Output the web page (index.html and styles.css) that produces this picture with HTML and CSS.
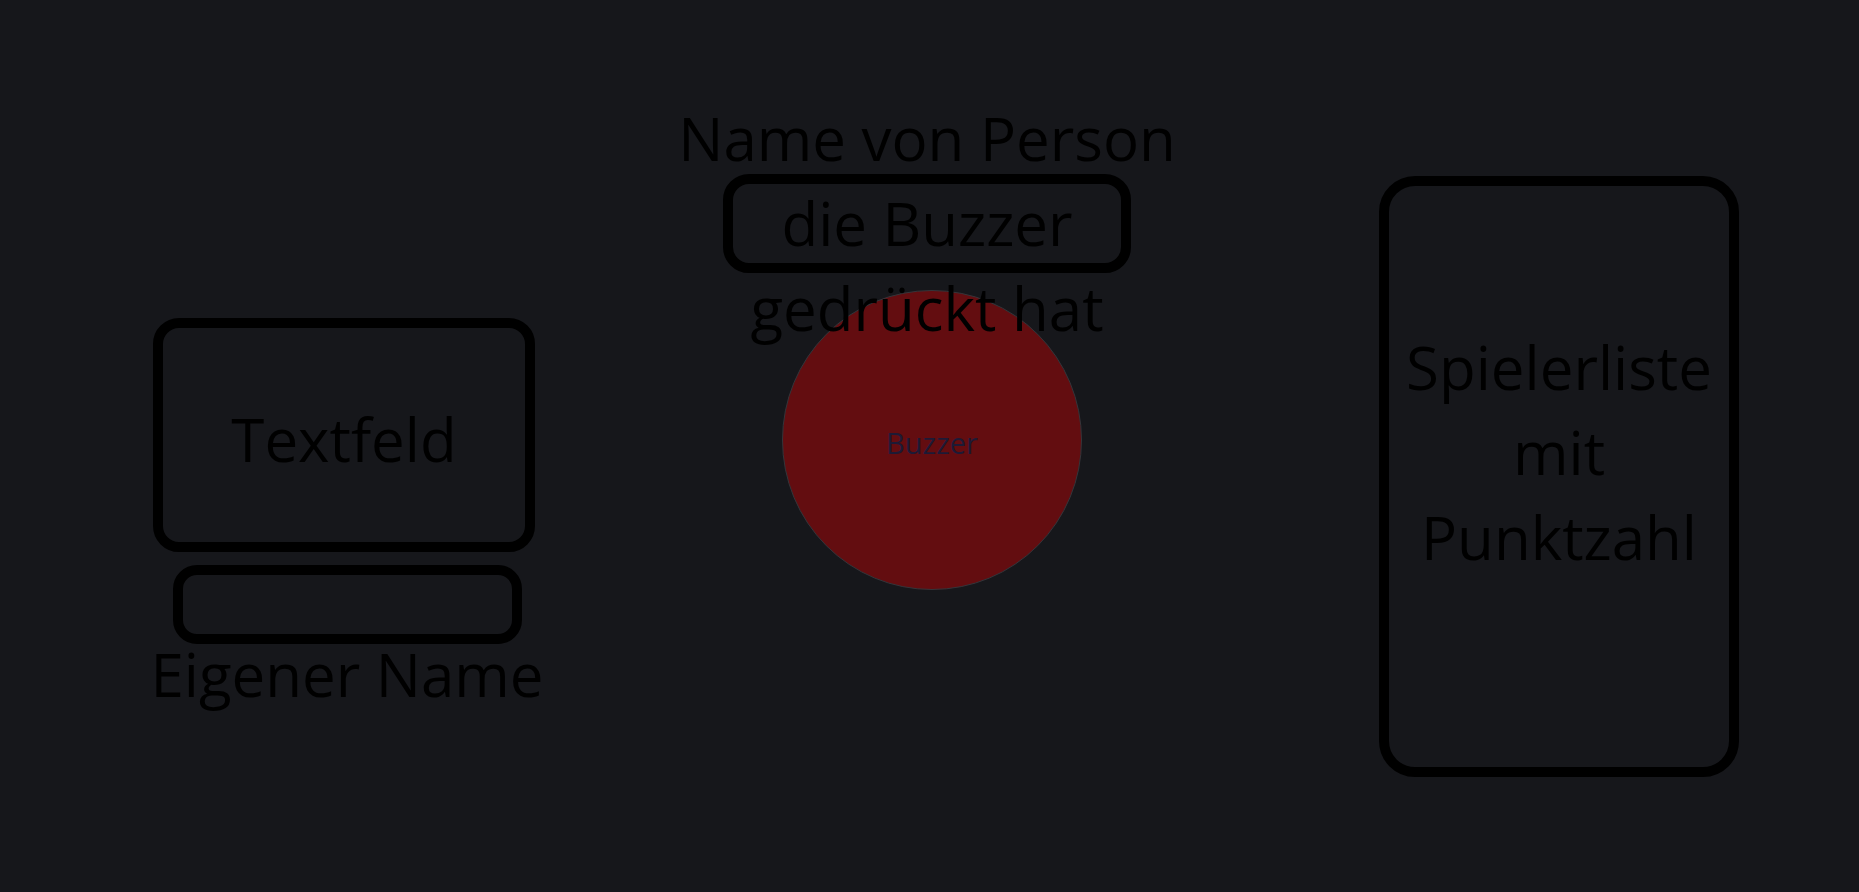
FILE: index.html
```html
<!DOCTYPE html>
<html lang="de">
<head>
<meta charset="utf-8">
<title>Buzzer</title>
<link rel="stylesheet" href="styles.css">
</head>
<body>
<main class="stage">
  <section class="col col-left">
    <div class="panel textfeld"><span class="big">Textfeld</span></div>
    <div class="panel namefield"></div>
    <div class="big label">Eigener Name</div>
  </section>
  <section class="col-center">
    <div class="big line">Name von Person</div>
    <div class="big whobox">die Buzzer</div>
    <div class="big line line-after">gedrückt hat</div>
    <div class="buzzer">Buzzer</div>
  </section>
  <section class="col col-right">
    <div class="big playerlist">Spielerliste mit Punktzahl</div>
  </section>
</main>
</body>
</html>
```

FILE: styles.css
```css
html, body {
  margin: 0;
  height: 100%;
}

body {
  background: #16171b;
  color: #000;
  font-family: "Open Sans", "Noto Sans", sans-serif;
  overflow: hidden;
}

.stage {
  display: flex;
  align-items: flex-start;
  padding-left: 152px;
}

.big {
  font-size: 60px;
  line-height: 85px;
}

.col {
  display: flex;
  flex-direction: column;
  align-items: center;
}

.panel {
  box-sizing: border-box;
  border: 10px solid #000;
}

.col-left {
  width: 390px;
  margin-top: 318px;
}

.textfeld {
  width: 382px;
  height: 234px;
  border-radius: 26px;
  margin-right: 6px;
  padding-top: 9px;
  display: flex;
  align-items: center;
  justify-content: center;
}

.namefield {
  width: 349px;
  height: 79px;
  border-radius: 24px;
  margin-top: 13px;
}

.label {
  line-height: 60px;
  white-space: nowrap;
}

.col-center {
  display: block;
  width: 500px;
  margin-left: 135px;
  margin-top: 96px;
}

.line {
  white-space: nowrap;
  text-align: center;
}

.whobox {
  box-sizing: border-box;
  width: 408px;
  height: 99px;
  margin: -7px auto 0;
  border: 10px solid #000;
  border-radius: 26px;
  line-height: 79px;
  text-align: center;
  white-space: nowrap;
}

.line-after {
  margin-top: -7px;
}

.buzzer {
  box-sizing: border-box;
  width: 300px;
  height: 300px;
  margin: -61px auto 0;
  position: relative;
  left: 5px;
  z-index: -1;
  padding-top: 4px;
  border-radius: 50%;
  border: 1px solid #34353a;
  background: #630d10;
  color: #1d1a35;
  font-size: 29px;
  display: flex;
  align-items: center;
  justify-content: center;
}

.col-right {
  width: 360px;
  margin-left: 202px;
  margin-top: 176px;
}

.playerlist {
  box-sizing: border-box;
  width: 360px;
  height: 601px;
  padding: 139px 10px 0;
  border: 10px solid #000;
  border-radius: 36px;
  text-align: center;
}
```
